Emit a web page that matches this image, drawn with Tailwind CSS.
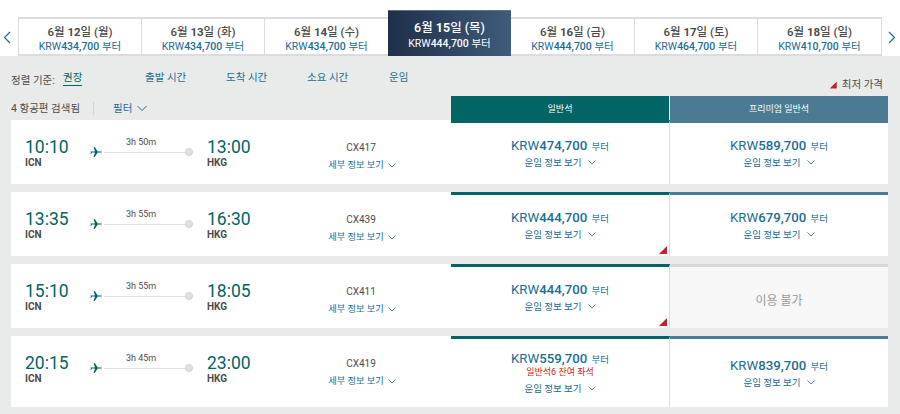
<!DOCTYPE html>
<html lang="ko">
<head>
<meta charset="utf-8">
<script src="https://cdn.jsdelivr.net/npm/@tailwindcss/browser@4"></script>
</head>
<body class="m-0">
<div class="w-[900px] h-[414px] overflow-hidden bg-[#e9ebea] font-[Roboto,'Noto_Sans_CJK_KR',sans-serif] text-[#4c4c4c]">
  <!-- date strip -->
  <div class="h-[56px] bg-white flex items-end pl-[18px] relative">
    <svg class="absolute left-[3px] top-[31px] w-[8px] h-[13px]" viewBox="0 0 8 13" fill="none" stroke="#1b6d96" stroke-width="1.2"><path d="M7 1 1.5 6.5 7 12"/></svg>
    <svg class="absolute left-[888px] top-[31px] w-[8px] h-[13px]" viewBox="0 0 8 13" fill="none" stroke="#1b6d96" stroke-width="1.2"><path d="M1 1l5.5 5.5L1 12"/></svg>
    <div class="flex items-end h-[46px]">
      <div class="w-[123px] h-[39px] border-y-2 border-l border-[#dcdcdc] text-center bg-white pt-[5px]"><div class="text-[11.5px] leading-[16px] font-medium">6월 <b>12</b>일 (월)</div><div class="text-[10.5px] leading-[14px] text-[#1b6d96]">KRW<b class="font-medium">434,700</b> 부터</div></div>
      <div class="w-[123px] h-[39px] border-y-2 border-l border-[#dcdcdc] text-center bg-white pt-[5px]"><div class="text-[11.5px] leading-[16px] font-medium">6월 <b>13</b>일 (화)</div><div class="text-[10.5px] leading-[14px] text-[#1b6d96]">KRW<b class="font-medium">434,700</b> 부터</div></div>
      <div class="w-[124px] h-[39px] border-y-2 border-l border-[#dcdcdc] text-center bg-white pt-[5px]"><div class="text-[11.5px] leading-[16px] font-medium">6월 <b>14</b>일 (수)</div><div class="text-[10.5px] leading-[14px] text-[#1b6d96]">KRW<b class="font-medium">434,700</b> 부터</div></div>
      <div class="w-[123px] h-[46px] bg-gradient-to-r from-[#1f2f49] to-[#3f5c7c] text-white text-center pt-[8px] border-t border-[#5d7288]"><div class="text-[12.5px] leading-[17px] font-medium">6월 <b>15</b>일 (목)</div><div class="text-[10.5px] leading-[15px]">KRW<b class="font-medium">444,700</b> 부터</div></div>
      <div class="w-[123px] h-[39px] border-y-2 border-[#dcdcdc] text-center bg-white pt-[5px]"><div class="text-[11.5px] leading-[16px] font-medium">6월 <b>16</b>일 (금)</div><div class="text-[10.5px] leading-[14px] text-[#1b6d96]">KRW<b class="font-medium">444,700</b> 부터</div></div>
      <div class="w-[123px] h-[39px] border-y-2 border-l border-[#dcdcdc] text-center bg-white pt-[5px]"><div class="text-[11.5px] leading-[16px] font-medium">6월 <b>17</b>일 (토)</div><div class="text-[10.5px] leading-[14px] text-[#1b6d96]">KRW<b class="font-medium">464,700</b> 부터</div></div>
      <div class="w-[125px] h-[39px] border-y-2 border-x border-[#dcdcdc] text-center bg-white pt-[5px]"><div class="text-[11.5px] leading-[16px] font-medium">6월 <b>18</b>일 (일)</div><div class="text-[10.5px] leading-[14px] text-[#1b6d96]">KRW<b class="font-medium">410,700</b> 부터</div></div>
    </div>
  </div>

  <!-- sort bar -->
  <div class="h-[40px] relative pl-[11px] pt-[15px] flex text-[10.5px] leading-[14px] text-[#1b6d96]">
    <span class="w-[52px] pt-[3px] text-[#4c4c4c]">정렬 기준:</span>
    <span class="w-[82px] h-[15px]"><span class="inline-block border-b border-[#006564] text-[#006564]">권장</span></span>
    <span class="w-[81px]">출발 시간</span>
    <span class="w-[81px]">도착 시간</span>
    <span class="w-[82px]">소요 시간</span>
    <span>운임</span>
    <div class="absolute right-[17px] top-[22px] flex items-center gap-[5px] text-[#4c4c4c]">
      <span class="w-[7px] h-[7px] bg-[#c4202e] [clip-path:polygon(100%_0,100%_100%,0_100%)]"></span>
      <span>최저 가격</span>
    </div>
  </div>

  <!-- header row -->
  <div class="h-[24px] flex ml-[11px] w-[877px]">
    <div class="w-[440px] flex items-start pt-[6px] text-[10.5px] leading-[14px]">
      <span class="w-[82px]">4 항공편 검색됨</span>
      <span class="w-px h-[13px] bg-[#cfd2d2] mr-[19px]"></span>
      <span class="text-[#1b6d96]">필터</span>
      <svg class="ml-[5px] mt-[3px] w-[10px] h-[7px]" viewBox="0 0 10 7" fill="none" stroke="#1b6d96" stroke-width="1"><path d="M.5 1 5 5.5 9.5 1"/></svg>
    </div>
    <div class="w-[218px] bg-[#006564] text-white text-center text-[9px] leading-[24px] pt-[1px]">일반석</div>
    <div class="w-[218px] ml-px bg-[#4a7a94] text-white text-center text-[9px] leading-[24px] pt-[1px]">프리미엄 일반석</div>
  </div>

  <!-- rows -->
  <div class="ml-[11px] w-[877px] flex flex-col gap-[8px]">

    <!-- row 1 -->
    <div class="h-[64px] bg-white flex">
      <div class="w-[440px] flex pl-[14px] pt-[17px]">
        <div class="w-[65px]"><div class="text-[17.5px] leading-[20px] text-[#006564]">10:10</div><div class="text-[10px] leading-[12px] font-bold">ICN</div></div>
        <div class="w-[117px] relative h-[20px]">
          <svg class="absolute left-0 top-[10px] w-[12px] h-[10px]" viewBox="0 0 12 10" fill="#006564"><path d="M0 4.5h5L3.6 0h1.1l3 4.5h3.1c.7 0 1.2.2 1.2.5s-.5.5-1.2.5H7.7l-3 4.5H3.6L5 5.5H2L1.2 7H.5L1 5z"/></svg>
          <div class="absolute left-[14px] right-[18px] top-[15px] h-px bg-[#dfe1e1]"></div>
          <div class="absolute left-[95px] top-[11px] w-[8px] h-[8px] rounded-full bg-[#dedfdf] border border-[#d2d4d4]"></div>
          <div class="absolute left-[36px] top-[-1px] text-[9px] leading-[12px] w-[44px]">3h 50m</div>
        </div>
        <div class="w-[65px]"><div class="text-[17.5px] leading-[20px] text-[#006564]">13:00</div><div class="text-[10px] leading-[12px] font-bold">HKG</div></div>
        <div class="w-[70px] ml-[55px] text-center mt-[2px] whitespace-nowrap"><div class="text-[10px] leading-[14px] mt-[2px] pr-[2px]">CX417</div><div class="text-[9.25px] leading-[14px] mt-[3px] text-[#1b6d96] flex items-center justify-center gap-[4px]"><span>세부 정보 보기</span><svg class="w-[8px] h-[5px]" viewBox="0 0 8 5" fill="none" stroke="#1b6d96" stroke-width=".8"><path d="M.5.5 4 4 7.5.5"/></svg></div></div>
      </div>
      <div class="w-[218px] border-t-[3px] border-[#006564] text-center text-[#1b6d96] pt-[13px] border-r border-r-[#dcdcdc] box-content"><div class="leading-[19px] text-[13.2px]">KRW<b class="font-medium">474,700</b> <span class="text-[9.5px] ml-[1px]">부터</span></div><div class="text-[9.5px] leading-[13px] flex items-center justify-center gap-[6px]"><span>운임 정보 보기</span><svg class="w-[8px] h-[5px]" viewBox="0 0 8 5" fill="none" stroke="#1b6d96" stroke-width=".8"><path d="M.5.5 4 4 7.5.5"/></svg></div></div>
      <div class="w-[218px] border-t-[3px] border-[#4a7a94] text-center text-[#1b6d96] pt-[13px]"><div class="leading-[19px] text-[13.2px]">KRW<b class="font-medium">589,700</b> <span class="text-[9.5px] ml-[1px]">부터</span></div><div class="text-[9.5px] leading-[13px] flex items-center justify-center gap-[6px]"><span>운임 정보 보기</span><svg class="w-[8px] h-[5px]" viewBox="0 0 8 5" fill="none" stroke="#1b6d96" stroke-width=".8"><path d="M.5.5 4 4 7.5.5"/></svg></div></div>
    </div>

    <!-- row 2 -->
    <div class="h-[64px] bg-white flex">
      <div class="w-[440px] flex pl-[14px] pt-[17px]">
        <div class="w-[65px]"><div class="text-[17.5px] leading-[20px] text-[#006564]">13:35</div><div class="text-[10px] leading-[12px] font-bold">ICN</div></div>
        <div class="w-[117px] relative h-[20px]">
          <svg class="absolute left-0 top-[10px] w-[12px] h-[10px]" viewBox="0 0 12 10" fill="#006564"><path d="M0 4.5h5L3.6 0h1.1l3 4.5h3.1c.7 0 1.2.2 1.2.5s-.5.5-1.2.5H7.7l-3 4.5H3.6L5 5.5H2L1.2 7H.5L1 5z"/></svg>
          <div class="absolute left-[14px] right-[18px] top-[15px] h-px bg-[#dfe1e1]"></div>
          <div class="absolute left-[95px] top-[11px] w-[8px] h-[8px] rounded-full bg-[#dedfdf] border border-[#d2d4d4]"></div>
          <div class="absolute left-[36px] top-[-1px] text-[9px] leading-[12px] w-[44px]">3h 55m</div>
        </div>
        <div class="w-[65px]"><div class="text-[17.5px] leading-[20px] text-[#006564]">16:30</div><div class="text-[10px] leading-[12px] font-bold">HKG</div></div>
        <div class="w-[70px] ml-[55px] text-center mt-[2px] whitespace-nowrap"><div class="text-[10px] leading-[14px] mt-[2px] pr-[2px]">CX439</div><div class="text-[9.25px] leading-[14px] mt-[3px] text-[#1b6d96] flex items-center justify-center gap-[4px]"><span>세부 정보 보기</span><svg class="w-[8px] h-[5px]" viewBox="0 0 8 5" fill="none" stroke="#1b6d96" stroke-width=".8"><path d="M.5.5 4 4 7.5.5"/></svg></div></div>
      </div>
      <div class="w-[218px] relative border-t-[3px] border-[#006564] text-center text-[#1b6d96] pt-[13px] border-r border-r-[#dcdcdc] box-content"><div class="leading-[19px] text-[13.2px]">KRW<b class="font-medium">444,700</b> <span class="text-[9.5px] ml-[1px]">부터</span></div><div class="text-[9.5px] leading-[13px] flex items-center justify-center gap-[6px]"><span>운임 정보 보기</span><svg class="w-[8px] h-[5px]" viewBox="0 0 8 5" fill="none" stroke="#1b6d96" stroke-width=".8"><path d="M.5.5 4 4 7.5.5"/></svg></div><span class="absolute right-[2px] bottom-[2px] w-[8px] h-[8px] bg-[#c4202e] [clip-path:polygon(100%_0,100%_100%,0_100%)]"></span></div>
      <div class="w-[218px] border-t-[3px] border-[#4a7a94] text-center text-[#1b6d96] pt-[13px]"><div class="leading-[19px] text-[13.2px]">KRW<b class="font-medium">679,700</b> <span class="text-[9.5px] ml-[1px]">부터</span></div><div class="text-[9.5px] leading-[13px] flex items-center justify-center gap-[6px]"><span>운임 정보 보기</span><svg class="w-[8px] h-[5px]" viewBox="0 0 8 5" fill="none" stroke="#1b6d96" stroke-width=".8"><path d="M.5.5 4 4 7.5.5"/></svg></div></div>
    </div>

    <!-- row 3 -->
    <div class="h-[64px] bg-white flex">
      <div class="w-[440px] flex pl-[14px] pt-[17px]">
        <div class="w-[65px]"><div class="text-[17.5px] leading-[20px] text-[#006564]">15:10</div><div class="text-[10px] leading-[12px] font-bold">ICN</div></div>
        <div class="w-[117px] relative h-[20px]">
          <svg class="absolute left-0 top-[10px] w-[12px] h-[10px]" viewBox="0 0 12 10" fill="#006564"><path d="M0 4.5h5L3.6 0h1.1l3 4.5h3.1c.7 0 1.2.2 1.2.5s-.5.5-1.2.5H7.7l-3 4.5H3.6L5 5.5H2L1.2 7H.5L1 5z"/></svg>
          <div class="absolute left-[14px] right-[18px] top-[15px] h-px bg-[#dfe1e1]"></div>
          <div class="absolute left-[95px] top-[11px] w-[8px] h-[8px] rounded-full bg-[#dedfdf] border border-[#d2d4d4]"></div>
          <div class="absolute left-[36px] top-[-1px] text-[9px] leading-[12px] w-[44px]">3h 55m</div>
        </div>
        <div class="w-[65px]"><div class="text-[17.5px] leading-[20px] text-[#006564]">18:05</div><div class="text-[10px] leading-[12px] font-bold">HKG</div></div>
        <div class="w-[70px] ml-[55px] text-center mt-[2px] whitespace-nowrap"><div class="text-[10px] leading-[14px] mt-[2px] pr-[2px]">CX411</div><div class="text-[9.25px] leading-[14px] mt-[3px] text-[#1b6d96] flex items-center justify-center gap-[4px]"><span>세부 정보 보기</span><svg class="w-[8px] h-[5px]" viewBox="0 0 8 5" fill="none" stroke="#1b6d96" stroke-width=".8"><path d="M.5.5 4 4 7.5.5"/></svg></div></div>
      </div>
      <div class="w-[218px] relative border-t-[3px] border-[#006564] text-center text-[#1b6d96] pt-[13px] border-r border-r-[#dcdcdc] box-content"><div class="leading-[19px] text-[13.2px]">KRW<b class="font-medium">444,700</b> <span class="text-[9.5px] ml-[1px]">부터</span></div><div class="text-[9.5px] leading-[13px] flex items-center justify-center gap-[6px]"><span>운임 정보 보기</span><svg class="w-[8px] h-[5px]" viewBox="0 0 8 5" fill="none" stroke="#1b6d96" stroke-width=".8"><path d="M.5.5 4 4 7.5.5"/></svg></div><span class="absolute right-[2px] bottom-[2px] w-[8px] h-[8px] bg-[#c4202e] [clip-path:polygon(100%_0,100%_100%,0_100%)]"></span></div>
      <div class="w-[218px] border-t-[3px] border-[#d8d8d8] bg-[#f7f7f7] text-center text-[#9a9a9a] text-[12px] leading-[68px] h-[64px]">이용 불가</div>
    </div>

    <!-- row 4 -->
    <div class="h-[71px] bg-white flex">
      <div class="w-[440px] flex pl-[14px] pt-[17px]">
        <div class="w-[65px]"><div class="text-[17.5px] leading-[20px] text-[#006564]">20:15</div><div class="text-[10px] leading-[12px] font-bold">ICN</div></div>
        <div class="w-[117px] relative h-[20px]">
          <svg class="absolute left-0 top-[10px] w-[12px] h-[10px]" viewBox="0 0 12 10" fill="#006564"><path d="M0 4.5h5L3.6 0h1.1l3 4.5h3.1c.7 0 1.2.2 1.2.5s-.5.5-1.2.5H7.7l-3 4.5H3.6L5 5.5H2L1.2 7H.5L1 5z"/></svg>
          <div class="absolute left-[14px] right-[18px] top-[15px] h-px bg-[#dfe1e1]"></div>
          <div class="absolute left-[95px] top-[11px] w-[8px] h-[8px] rounded-full bg-[#dedfdf] border border-[#d2d4d4]"></div>
          <div class="absolute left-[36px] top-[-1px] text-[9px] leading-[12px] w-[44px]">3h 45m</div>
        </div>
        <div class="w-[65px]"><div class="text-[17.5px] leading-[20px] text-[#006564]">23:00</div><div class="text-[10px] leading-[12px] font-bold">HKG</div></div>
        <div class="w-[70px] ml-[55px] text-center mt-[2px] whitespace-nowrap"><div class="text-[10px] leading-[14px] mt-[2px] pr-[2px]">CX419</div><div class="text-[9.25px] leading-[14px] mt-[3px] text-[#1b6d96] flex items-center justify-center gap-[4px]"><span>세부 정보 보기</span><svg class="w-[8px] h-[5px]" viewBox="0 0 8 5" fill="none" stroke="#1b6d96" stroke-width=".8"><path d="M.5.5 4 4 7.5.5"/></svg></div></div>
      </div>
      <div class="w-[218px] border-t-[3px] border-[#006564] text-center text-[#1b6d96] pt-[10px] border-r border-r-[#dcdcdc] box-content"><div class="leading-[19px] text-[13.2px]">KRW<b class="font-medium">559,700</b> <span class="text-[9.5px] ml-[1px]">부터</span></div><div class="text-[9px] leading-[10px] text-[#d0260f] -mt-[2px]">일반석6 잔여 좌석</div><div class="text-[9.5px] leading-[13px] mt-[5px] flex items-center justify-center gap-[6px]"><span>운임 정보 보기</span><svg class="w-[8px] h-[5px]" viewBox="0 0 8 5" fill="none" stroke="#1b6d96" stroke-width=".8"><path d="M.5.5 4 4 7.5.5"/></svg></div></div>
      <div class="w-[218px] border-t-[3px] border-[#4a7a94] text-center text-[#1b6d96] pt-[17px]"><div class="leading-[19px] text-[13.2px]">KRW<b class="font-medium">839,700</b> <span class="text-[9.5px] ml-[1px]">부터</span></div><div class="text-[9.5px] leading-[13px] flex items-center justify-center gap-[6px]"><span>운임 정보 보기</span><svg class="w-[8px] h-[5px]" viewBox="0 0 8 5" fill="none" stroke="#1b6d96" stroke-width=".8"><path d="M.5.5 4 4 7.5.5"/></svg></div></div>
    </div>
  </div>
</div>
</body>
</html>
